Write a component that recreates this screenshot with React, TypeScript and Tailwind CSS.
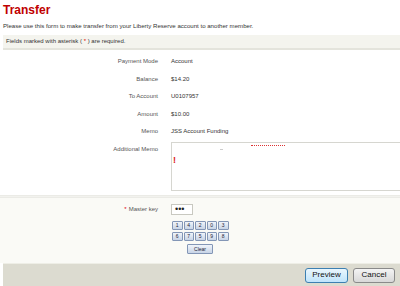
import React from 'react';

const ROWS = [
  { label: 'Payment Mode', value: 'Account' },
  { label: 'Balance', value: '$14.20' },
  { label: 'To Account', value: 'U0107957' },
  { label: 'Amount', value: '$10.00' },
  { label: 'Memo', value: 'JSS Account Funding' },
];

const KEYS = [
  ['1', '4', '2', '0', '3'],
  ['6', '7', '5', '9', '8'],
];

function KeyButton({ children, wide }: { children: React.ReactNode; wide?: boolean }) {
  return (
    <button
      className={`flex items-center justify-center rounded-[1px] border border-[#8396b6] bg-gradient-to-b from-[#f0f4fa] to-[#c8d4e6] text-[5px] leading-none text-[#223] ${
        wide ? 'h-[10px] w-[26px]' : 'h-[9px] w-[10.5px]'
      }`}
    >
      {children}
    </button>
  );
}

export default function App() {
  return (
    <div className="flex h-[286px] w-[400px] flex-col overflow-hidden bg-white font-['Liberation_Sans',Arial,sans-serif] text-[#444]">
      {/* ── Header ─────────────────────────────────────────── */}
      <div className="pl-[3px]">
        <h1 className="pt-[4px] text-[12px] leading-[12px] font-bold text-[#c00000]">Transfer</h1>
        <p className="mt-[7px] text-[6.1px] leading-[6px] text-[#333]">
          Please use this form to make transfer from your Liberty Reserve account to another member.
        </p>
      </div>

      {/* Required fields note */}
      <div className="mt-[6px] ml-[3px] flex h-[15px] items-center border-b-2 border-[#e4e4dc] bg-[#f4f4ee] pl-[3px] text-[6px] text-[#333]">
        Fields marked with asterisk (&nbsp;<span className="text-[#e00000]">*</span>&nbsp;) are required.
      </div>

      {/* ── Detail rows ────────────────────────────────────── */}
      <div className="flex flex-col pt-[3px]">
        {ROWS.map(({ label, value }) => (
          <div key={label} className="flex h-[17.5px] items-center text-[6px]">
            <span className="w-[158px] shrink-0 text-right text-[#555]">{label}</span>
            <span className="pl-[13px] text-[#333]">{value}</span>
          </div>
        ))}
        <div className="mt-[1.5px] flex text-[6px]">
          <span className="w-[158px] shrink-0 pt-[3px] text-right text-[#555]">Additional Memo</span>
          <div className="ml-[13px] flex h-[49px] flex-1 flex-col border border-r-0 border-[#d6d6d0] bg-white">
            <div className="mt-[2px] ml-[79px] h-[1px] w-[34px] border-t border-dotted border-[#d33]" />
            <div className="mt-[3px] ml-[48px] h-[1px] w-[3px] bg-[#ccc]" />
            <span className="mt-[6px] ml-[1px] text-[9px] leading-[9px] font-bold text-[#d22]">!</span>
          </div>
        </div>
      </div>

      {/* Separator */}
      <div className="mt-[4px] h-[3px] border-t border-b border-[#ebebe6] bg-[#f2f2ee]" />

      {/* ── Master key ─────────────────────────────────────── */}
      <div className="flex flex-1 flex-col bg-[#fafaf6] pt-[6px]">
        <div className="flex items-center text-[6px]">
          <span className="w-[158px] shrink-0 text-right text-[#555]">
            <span className="mr-[2px] text-[#e00000]">*</span>Master key
          </span>
          <div className="ml-[13px] flex h-[11px] w-[22px] items-center border border-[#c8c8c0] bg-white pl-[3px] text-[9px] leading-none text-[#222]">
            •••
          </div>
        </div>
        <div className="mt-[6px] ml-[172px] flex flex-col items-start gap-[2px]">
          {KEYS.map((row, i) => (
            <div key={i} className="flex gap-[1px]">
              {row.map((k) => (
                <KeyButton key={k}>{k}</KeyButton>
              ))}
            </div>
          ))}
          <div className="ml-[15px] mt-[1px]">
            <KeyButton wide>Clear</KeyButton>
          </div>
        </div>
      </div>

      {/* ── Footer ─────────────────────────────────────────── */}
      <div className="ml-[3px] flex h-[23px] shrink-0 items-center justify-end gap-[5px] border-t border-[#eeeee6] bg-[#dcdbd0] pr-[5px]">
        <button className="flex h-[15px] w-[43px] items-center justify-center rounded-[3px] border border-[#3c7fb1] bg-gradient-to-b from-[#eaf6fd] to-[#bfe4fb] text-[8px] text-[#111]">
          Preview
        </button>
        <button className="flex h-[15px] w-[42px] items-center justify-center rounded-[3px] border border-[#8a8a8a] bg-gradient-to-b from-[#f4f4f4] to-[#d8d8d8] text-[8px] text-[#111]">
          Cancel
        </button>
      </div>
    </div>
  );
}
